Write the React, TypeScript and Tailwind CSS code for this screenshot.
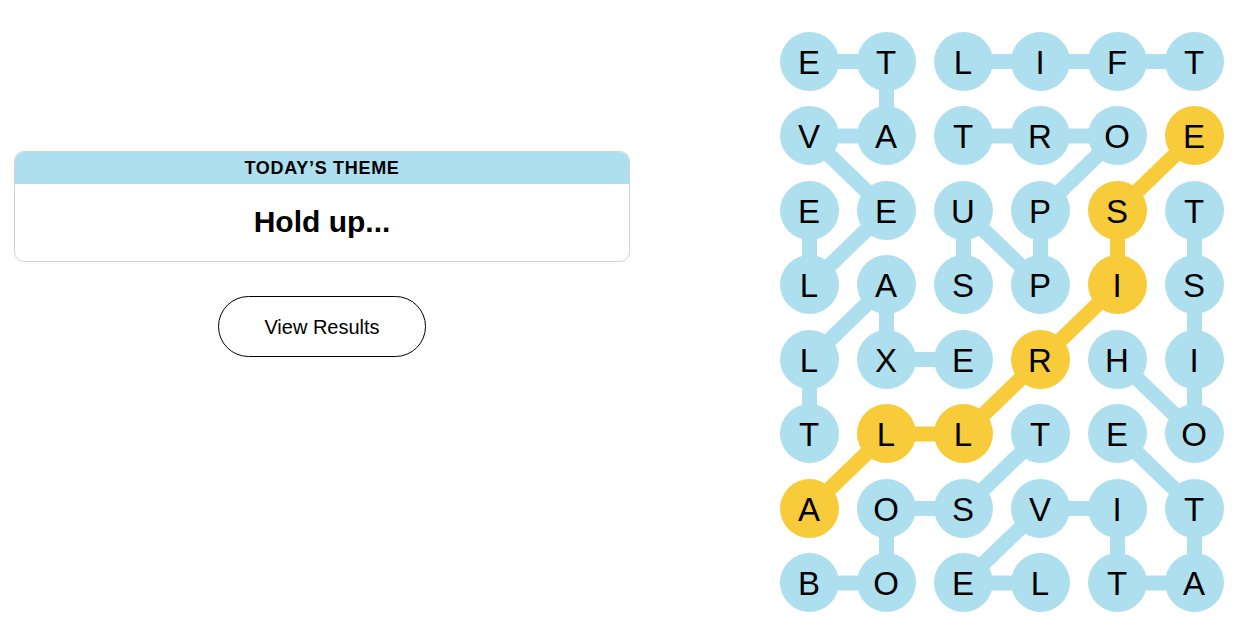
import React from "react";

const BOARD = [
  "ETLIFT",
  "VATROE",
  "EEUPST",
  "LASPIS",
  "LXERHI",
  "TLLTEO",
  "AOSVIT",
  "BOELTA",
];

// [row, col, row, col]
const BLUE_LINKS: [number, number, number, number][] = [
  [0, 0, 0, 1],
  [0, 1, 1, 1],
  [1, 0, 1, 1],
  [1, 0, 2, 1],
  [0, 2, 0, 3],
  [0, 3, 0, 4],
  [0, 4, 0, 5],
  [1, 2, 1, 3],
  [1, 3, 1, 4],
  [1, 4, 2, 3],
  [2, 0, 3, 0],
  [2, 1, 3, 0],
  [2, 2, 3, 2],
  [2, 2, 3, 3],
  [2, 3, 3, 3],
  [2, 5, 3, 5],
  [3, 5, 4, 5],
  [3, 1, 4, 0],
  [3, 1, 4, 1],
  [4, 1, 4, 2],
  [4, 0, 5, 0],
  [4, 4, 5, 5],
  [4, 5, 5, 5],
  [5, 3, 6, 2],
  [5, 4, 6, 5],
  [6, 1, 6, 2],
  [6, 1, 7, 1],
  [7, 0, 7, 1],
  [6, 3, 7, 2],
  [7, 2, 7, 3],
  [6, 3, 6, 4],
  [6, 4, 7, 4],
  [6, 5, 7, 5],
  [7, 4, 7, 5],
];

const SPANGRAM: [number, number][] = [
  [1, 5],
  [2, 4],
  [3, 4],
  [4, 3],
  [5, 2],
  [5, 1],
  [6, 0],
];

const COL_STEP = 77;
const ROW_STEP = 74.5;
const R = 29.5;

const cx = (c: number) => R + c * COL_STEP;
const cy = (r: number) => R + r * ROW_STEP;

function Board() {
  const found = new Set(SPANGRAM.map(([r, c]) => `${r}-${c}`));

  return (
    <div className="relative w-[444px] h-[580.5px]">
      <svg
        className="absolute inset-0"
        width={444}
        height={581}
        viewBox="0 0 444 581"
      >
        {BLUE_LINKS.map(([r1, c1, r2, c2], i) => (
          <line
            key={i}
            x1={cx(c1)}
            y1={cy(r1)}
            x2={cx(c2)}
            y2={cy(r2)}
            stroke="#aedfee"
            strokeWidth={15}
          />
        ))}
        {SPANGRAM.slice(1).map(([r, c], i) => {
          const [pr, pc] = SPANGRAM[i];
          return (
            <line
              key={i}
              x1={cx(pc)}
              y1={cy(pr)}
              x2={cx(c)}
              y2={cy(r)}
              stroke="#f8cb3a"
              strokeWidth={15}
            />
          );
        })}
      </svg>

      <div className="relative grid grid-cols-[repeat(6,59px)] gap-x-[18px] gap-y-[15.5px]">
        {BOARD.map((row, r) =>
          row.split("").map((letter, c) => (
            <button
              key={`${r}-${c}`}
              className={
                "w-[59px] h-[59px] rounded-full flex items-center justify-center pt-[2px] text-[33px] leading-none text-black font-['Liberation_Sans',Arial,sans-serif] " +
                (found.has(`${r}-${c}`) ? "bg-[#f8cb3a]" : "bg-[#aedfee]")
              }
            >
              {letter}
            </button>
          ))
        )}
      </div>
    </div>
  );
}

export default function App() {
  return (
    <div className="w-[1250px] h-[642px] bg-white flex font-['Liberation_Sans',Arial,sans-serif] text-black">
      <div className="w-[630px] pl-[14px] pt-[151px] flex flex-col items-center">
        <div className="w-[616px] h-[111px] rounded-[10px] border border-[#d3d3d3] overflow-hidden flex flex-col">
          <div className="h-[32px] bg-[#aedfee] flex items-center justify-center text-[18px] font-bold tracking-[0.7px]">
            TODAY’S THEME
          </div>
          <div className="flex-1 flex items-center justify-center pb-[2px] text-[30px] font-bold">
            Hold up...
          </div>
        </div>

        <button className="mt-[34px] w-[208px] h-[61px] rounded-full border border-black bg-white text-[20px]">
          View Results
        </button>
      </div>

      <div className="ml-[149.5px] pt-[31.5px]">
        <Board />
      </div>
    </div>
  );
}
